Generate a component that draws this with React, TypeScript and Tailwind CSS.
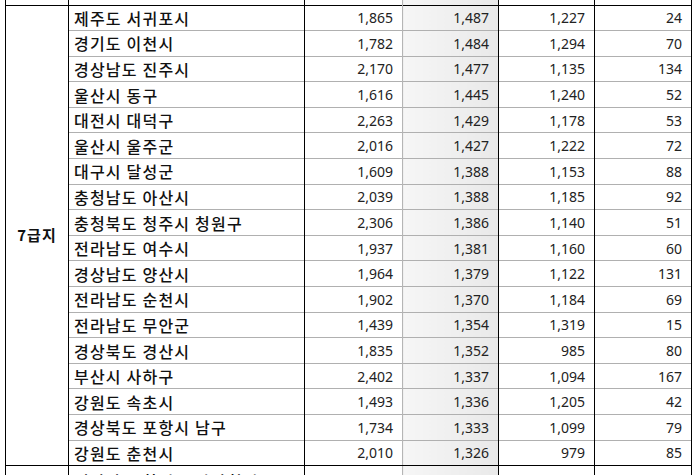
import React from 'react';

const ROWS: [string, string, string, string, string][] = [
  ['제주도 서귀포시', '1,865', '1,487', '1,227', '24'],
  ['경기도 이천시', '1,782', '1,484', '1,294', '70'],
  ['경상남도 진주시', '2,170', '1,477', '1,135', '134'],
  ['울산시 동구', '1,616', '1,445', '1,240', '52'],
  ['대전시 대덕구', '2,263', '1,429', '1,178', '53'],
  ['울산시 울주군', '2,016', '1,427', '1,222', '72'],
  ['대구시 달성군', '1,609', '1,388', '1,153', '88'],
  ['충청남도 아산시', '2,039', '1,388', '1,185', '92'],
  ['충청북도 청주시 청원구', '2,306', '1,386', '1,140', '51'],
  ['전라남도 여수시', '1,937', '1,381', '1,160', '60'],
  ['경상남도 양산시', '1,964', '1,379', '1,122', '131'],
  ['전라남도 순천시', '1,902', '1,370', '1,184', '69'],
  ['전라남도 무안군', '1,439', '1,354', '1,319', '15'],
  ['경상북도 경산시', '1,835', '1,352', '985', '80'],
  ['부산시 사하구', '2,402', '1,337', '1,094', '167'],
  ['강원도 속초시', '1,493', '1,336', '1,205', '42'],
  ['경상북도 포항시 남구', '1,734', '1,333', '1,099', '79'],
  ['강원도 춘천시', '2,010', '1,326', '979', '85'],
];

const kr = "font-['Noto_Sans_CJK_KR',sans-serif]";
const name = `pl-[5px] text-left text-[16px] tracking-[1.2px] font-medium text-[#111] whitespace-nowrap ${kr}`;
const num = "font-['Noto_Sans','Noto_Sans_CJK_KR',sans-serif] text-[14px] text-[#222] text-right pr-[9px]";
const shade = 'bg-gradient-to-r from-[#f6f6f6] to-[#e9e9e9]';

export default function App() {
  return (
    <div className="h-[475px] w-[700px] overflow-hidden bg-white">
      <table className="ml-[5px] w-[686px] table-fixed border-collapse">
        <colgroup>
          <col className="w-[63px]" />
          <col className="w-[236px]" />
          <col className="w-[98px]" />
          <col className="w-[96px]" />
          <col className="w-[96px]" />
          <col className="w-[97px]" />
        </colgroup>
        <tbody>
          {/* tail of the previous group */}
          <tr className="h-[5px]">
            <td className="border-x border-black p-0" />
            <td className="border-x border-black p-0" />
            <td className="border-l border-black border-r border-r-[#b5b5b5] p-0" />
            <td className={`border-r border-black p-0 ${shade}`} />
            <td className="border-x border-black p-0" />
            <td className="border-x border-black p-0" />
          </tr>

          {ROWS.map((r, i) => {
            const top = i === 0 ? 'border-t border-t-black' : 'border-t border-t-[#b0b0b0]';
            const bottom = i === ROWS.length - 1 ? 'border-b border-b-black' : '';
            return (
              <tr key={r[0]} className="h-[25.6px]">
                {i === 0 && (
                  <td
                    rowSpan={ROWS.length}
                    className={`border border-black p-0 text-center align-middle text-[15px] tracking-[1px] font-bold text-[#111] ${kr}`}
                  >
                    7급지
                  </td>
                )}
                <td className={`border-x border-x-black ${top} ${bottom} p-0 ${name}`}>{r[0]}</td>
                <td className={`border-l border-l-black border-r border-r-[#b5b5b5] ${top} ${bottom} p-0 ${num}`}>
                  {r[1]}
                </td>
                <td className={`border-r border-r-black ${top} ${bottom} p-0 ${shade} ${num}`}>{r[2]}</td>
                <td className={`border-x border-x-black ${top} ${bottom} p-0 ${num}`}>{r[3]}</td>
                <td className={`border-x border-x-black ${top} ${bottom} p-0 ${num}`}>{r[4]}</td>
              </tr>
            );
          })}

          {/* start of the next group, cut off by the frame */}
          <tr className="h-[25.6px]">
            <td className="border-x border-black p-0" />
            <td className={`border-x border-black p-0 align-top pt-[3px] ${name}`}>경상남도 창원시 마산회원구</td>
            <td className="border-l border-black border-r border-r-[#b5b5b5] p-0" />
            <td className={`border-r border-black p-0 ${shade}`} />
            <td className="border-x border-black p-0" />
            <td className="border-x border-black p-0" />
          </tr>
        </tbody>
      </table>
    </div>
  );
}
